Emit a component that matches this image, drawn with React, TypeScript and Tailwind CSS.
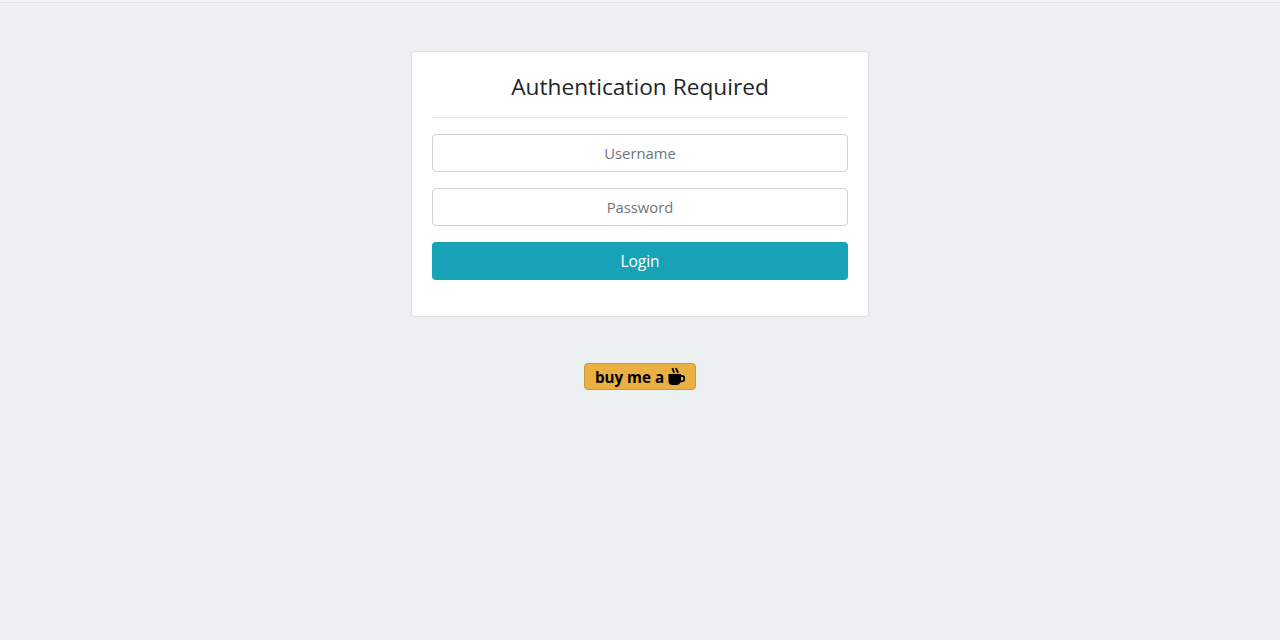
export default function App() {
	return (
		<div className="min-h-screen bg-[#ecf0f1] font-['Open_Sans','Noto_Sans',sans-serif] flex flex-col items-center">
			<div className="h-[3px] w-full border-b border-[#dee2e6] bg-[#f4f5f6]" />

			{/* Login card */}
			<div className="mt-12 w-[458px] rounded border border-[#dfe3e5] bg-white p-5">
				<h3 className="h-[29px] text-center text-[22.7px] leading-[30px] text-[#212529]">Authentication Required</h3>
				<hr className="my-4 border-[#e5e7e8]" />
				<input
					placeholder="Username"
					className="mb-4 block h-[38px] w-full rounded border border-[#ced4da] bg-white text-center text-[14.8px] text-[#495057] placeholder:text-[#6c757d]"
				/>
				<input
					type="password"
					placeholder="Password"
					className="mb-4 block h-[38px] w-full rounded border border-[#ced4da] bg-white text-center text-[14.8px] text-[#495057] placeholder:text-[#6c757d]"
				/>
				<button className="mb-4 block h-[38px] w-full rounded bg-[#17a2b8] pt-0.5 text-center text-[15.5px] text-white">Login</button>
			</div>

			<a className="mt-[46px] flex h-[27px] w-28 items-center justify-center gap-1 rounded border border-[#c69b3c] bg-[#eab042] text-[15.2px] font-bold text-black">
				<span className="pt-0.5">buy me a</span>
				<svg width="17" height="19" viewBox="0 0 17 19" fill="currentColor" aria-hidden="true">
					<path d="M0.500 7h12.500v1h.8a3 3 0 0 1 0 7.200h-1.400A4 4 0 0 1 9 18H4.500a4 4 0 0 1-4-4zM13 9.800v3.700h.6a1.850 1.850 0 0 0 0-3.700z" />
					<path d="M3.500 1.500L5.300.800l1.700 4.800-1.700.6zM7 1.500L8.800.800l2.200 4.800-1.700.6z" />
				</svg>
			</a>
		</div>
	)
}
